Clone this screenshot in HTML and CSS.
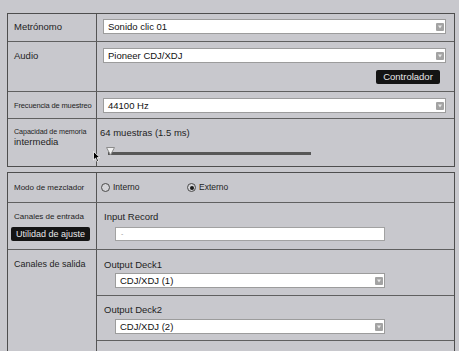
FILE: index.html
```html
<!DOCTYPE html>
<html lang="es">
<head>
    <meta charset="UTF-8">
    <meta name="viewport" content="width=device-width, initial-scale=1.0">
    <title>Preferencias de audio</title>
    <link rel="stylesheet" href="styles.css">
</head>
<body>
    <div class="panel">
        <div class="row r-metro">
            <div class="label">Metrónomo</div>
            <div class="value">
                <div class="select"><span>Sonido clic 01</span>
                    <svg class="arrow" width="8" height="8" viewBox="0 0 8 8"><rect x="0" y="0" width="8" height="8" rx="1" fill="#a3a3a3"/><polygon points="2,2.5 6,2.5 4,5.5" fill="#e8e8e8"/></svg>
                </div>
            </div>
        </div>
        <div class="row r-audio">
            <div class="label">Audio</div>
            <div class="value">
                <div class="select"><span>Pioneer CDJ/XDJ</span>
                    <svg class="arrow" width="8" height="8" viewBox="0 0 8 8"><rect x="0" y="0" width="8" height="8" rx="1" fill="#a3a3a3"/><polygon points="2,2.5 6,2.5 4,5.5" fill="#e8e8e8"/></svg>
                </div>
                <div class="btn-line"><span class="btn btn-ctrl">Controlador</span></div>
            </div>
        </div>
        <div class="row r-freq">
            <div class="label small">Frecuencia de muestreo</div>
            <div class="value">
                <div class="select"><span>44100 Hz</span>
                    <svg class="arrow" width="8" height="8" viewBox="0 0 8 8"><rect x="0" y="0" width="8" height="8" rx="1" fill="#a3a3a3"/><polygon points="2,2.5 6,2.5 4,5.5" fill="#e8e8e8"/></svg>
                </div>
            </div>
        </div>
        <div class="row r-buffer">
            <div class="label">
                <span class="tiny">Capacidad de memoria</span>
                <span class="second">intermedia</span>
            </div>
            <div class="value">
                <div class="buffer-text">64 muestras (1.5 ms)</div>
                <svg class="slider" width="212" height="10" viewBox="0 0 212 10">
                    <rect x="2" y="5" width="203" height="3" fill="#575757"/>
                    <polygon points="0.5,0.5 8.5,0.5 4.5,8" fill="#f2f2f2" stroke="#8c8c8c" stroke-width="1"/>
                </svg>
            </div>
        </div>
    </div>

    <div class="panel">
        <div class="row r-mode">
            <div class="label">Modo de mezclador</div>
            <div class="value">
                <span class="option"><span class="radio"></span>Interno</span>
                <span class="option"><span class="radio on"></span>Externo</span>
            </div>
        </div>
        <div class="row r-input">
            <div class="label">
                <div>Canales de entrada</div>
                <span class="btn btn-util">Utilidad de ajuste</span>
            </div>
            <div class="value">
                <div class="deck-name">Input Record</div>
                <div class="field">-</div>
            </div>
        </div>
        <div class="row r-output">
            <div class="label">Canales de salida</div>
            <div class="value">
                <div class="deck">
                    <div class="deck-name">Output Deck1</div>
                    <div class="select deck-select"><span>CDJ/XDJ (1)</span>
                        <svg class="arrow" width="8" height="8" viewBox="0 0 8 8"><rect x="0" y="0" width="8" height="8" rx="1" fill="#a3a3a3"/><polygon points="2,2.5 6,2.5 4,5.5" fill="#e8e8e8"/></svg>
                    </div>
                </div>
                <div class="deck">
                    <div class="deck-name">Output Deck2</div>
                    <div class="select deck-select"><span>CDJ/XDJ (2)</span>
                        <svg class="arrow" width="8" height="8" viewBox="0 0 8 8"><rect x="0" y="0" width="8" height="8" rx="1" fill="#a3a3a3"/><polygon points="2,2.5 6,2.5 4,5.5" fill="#e8e8e8"/></svg>
                    </div>
                </div>
                <div class="deck deck-more"></div>
            </div>
        </div>
    </div>

    <svg class="cursor" width="9" height="12" viewBox="0 0 9 12">
        <path d="M0.5 0.5 L0.5 9 L2.6 7.1 L4.1 10.6 L5.6 10 L4.1 6.6 L6.9 6.6 Z" fill="#000" stroke="#fff" stroke-width="0.8"/>
    </svg>
</body>
</html>
```

FILE: styles.css
```css
* {
    box-sizing: border-box;
}
html, body {
    margin: 0;
    height: 351px;
    overflow: hidden;
}
body {
    position: relative;
    padding-top: 13px;
    background: #c8c8cd;
    font-family: "Liberation Sans", Arial, sans-serif;
    font-size: 9.5px;
    color: #1e1e1e;
}
.panel {
    margin-left: 7px;
    width: 448px;
    border: 1px solid #4e4e4e;
}
.panel + .panel {
    margin-top: 5px;
}
.row {
    display: grid;
    grid-template-columns: 89px 1fr;
    border-top: 1px solid #606060;
}
.row:first-child {
    border-top: none;
}
.label {
    border-right: 1px solid #555;
    padding-left: 6px;
}
.value {
    padding: 0 8px 0 6px;
}
.select {
    display: flex;
    align-items: center;
    justify-content: space-between;
    height: 15px;
    padding: 0 1px 0 4px;
    background: #fff;
    border: 1px solid #9c9c9c;
    color: #111;
    line-height: 13px;
}
.arrow {
    display: block;
}
.btn {
    display: inline-block;
    height: 14px;
    line-height: 14px;
    background: #141414;
    color: #e8e8e8;
    text-align: center;
    border-radius: 2px;
}

/* first panel */
.r-metro > div {
    padding-top: 5px;
    padding-bottom: 7px;
    line-height: 15px;
}
.r-audio > div {
    padding-top: 6px;
    padding-bottom: 7px;
    line-height: 15px;
}
.btn-line {
    display: flex;
    justify-content: flex-end;
    margin-top: 7px;
    padding-right: 6px;
}
.btn-ctrl {
    width: 64px;
}
.r-freq > div {
    padding-top: 6px;
    padding-bottom: 5px;
    line-height: 15px;
}
.small {
    font-size: 7.5px;
    letter-spacing: -0.15px;
}
.r-buffer > div {
    padding-top: 8px;
    padding-bottom: 9px;
}
.r-buffer .value {
    padding-left: 3px;
}
.tiny {
    display: block;
    font-size: 7.2px;
    line-height: 9px;
    letter-spacing: -0.1px;
}
.second {
    display: block;
    line-height: 11px;
}
.buffer-text {
    line-height: 12px;
}
.slider {
    display: block;
    margin: 8px 0 0 6px;
}

/* second panel */
.r-mode > div {
    padding-top: 7px;
    padding-bottom: 7px;
    line-height: 15px;
}
.r-mode .label {
    font-size: 8px;
}
.r-mode .value {
    display: flex;
    align-items: center;
    padding-left: 4px;
    font-size: 8.5px;
}
.option {
    display: flex;
    align-items: center;
    gap: 3px;
    width: 86px;
}
.radio {
    position: relative;
    width: 9px;
    height: 9px;
    border: 1px solid #4a4a4a;
    border-radius: 50%;
    background: #d4d4d8;
}
.radio.on::after {
    content: "";
    position: absolute;
    left: 1.5px;
    top: 1.5px;
    width: 4px;
    height: 4px;
    border-radius: 50%;
    background: #1a1a1a;
}
.r-input > div {
    padding-top: 7px;
    padding-bottom: 8px;
}
.r-input .label {
    font-size: 8px;
    line-height: 13px;
}
.btn-util {
    width: 79px;
    margin: 4px 0 0 -3px;
    font-size: 9px;
}
.r-input .value {
    padding-left: 7px;
}
.deck-name {
    line-height: 13px;
}
.field {
    width: 270px;
    height: 14px;
    margin: 4px 0 0 11px;
    padding-left: 5px;
    background: #fff;
    border: 1px solid #a2a2a2;
    color: #999;
    font-size: 7px;
    line-height: 12px;
}
.r-output .label {
    padding-top: 8px;
    font-size: 9px;
    line-height: 13px;
}
.r-output .value {
    padding: 0;
}
.deck {
    padding: 8px 0 7px 7px;
}
.deck + .deck {
    border-top: 1px solid #606060;
    padding-top: 7px;
    padding-bottom: 6px;
}
.deck-select {
    width: 270px;
    margin: 2px 0 0 11px;
}
.deck + .deck .deck-select {
    margin-top: 3px;
}
.deck.deck-more {
    height: 14px;
    padding: 0;
}

.cursor {
    position: absolute;
    left: 93px;
    top: 151px;
}
```
